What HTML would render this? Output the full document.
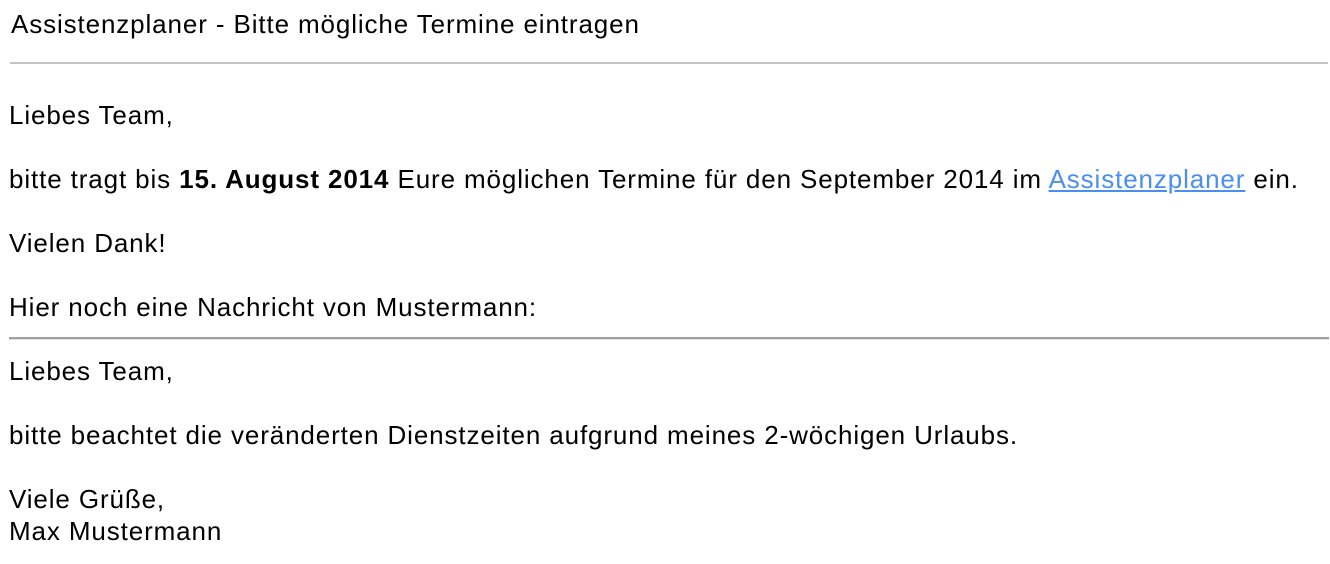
<!DOCTYPE html>
<html><head><meta charset="utf-8"><style>
body{margin:0;background:#fff;width:1330px;height:564px;overflow:hidden;font-family:"Liberation Sans",Arial,sans-serif;font-size:26px;color:#000;letter-spacing:0.88px}
.l{position:absolute;left:9px;line-height:32px;white-space:nowrap}
a{color:#4a8ef0;text-decoration:underline}
.hr1{position:absolute;left:10px;width:1318px;top:62px;height:2px;background:#c4c4c4}
.hr2{position:absolute;left:9px;width:1320px;top:337px;height:2px;background:#a0a0a0;border-bottom:1px solid #dedede}
</style></head><body>
<div class="l" style="top:8px;left:11px">Assistenzplaner - Bitte mögliche Termine eintragen</div>
<div class="hr1"></div>
<div class="l" style="top:99px">Liebes Team,</div>
<div class="l" style="top:163px">bitte tragt bis <b>15. August 2014</b> Eure möglichen Termine für den September 2014 im <a>Assistenzplaner</a> ein.</div>
<div class="l" style="top:227px">Vielen Dank!</div>
<div class="l" style="top:291px">Hier noch eine Nachricht von Mustermann:</div>
<div class="hr2"></div>
<div class="l" style="top:355px">Liebes Team,</div>
<div class="l" style="top:419px">bitte beachtet die veränderten Dienstzeiten aufgrund meines 2-wöchigen Urlaubs.</div>
<div class="l" style="top:483px">Viele Grüße,</div>
<div class="l" style="top:515px">Max Mustermann</div>
</body></html>
